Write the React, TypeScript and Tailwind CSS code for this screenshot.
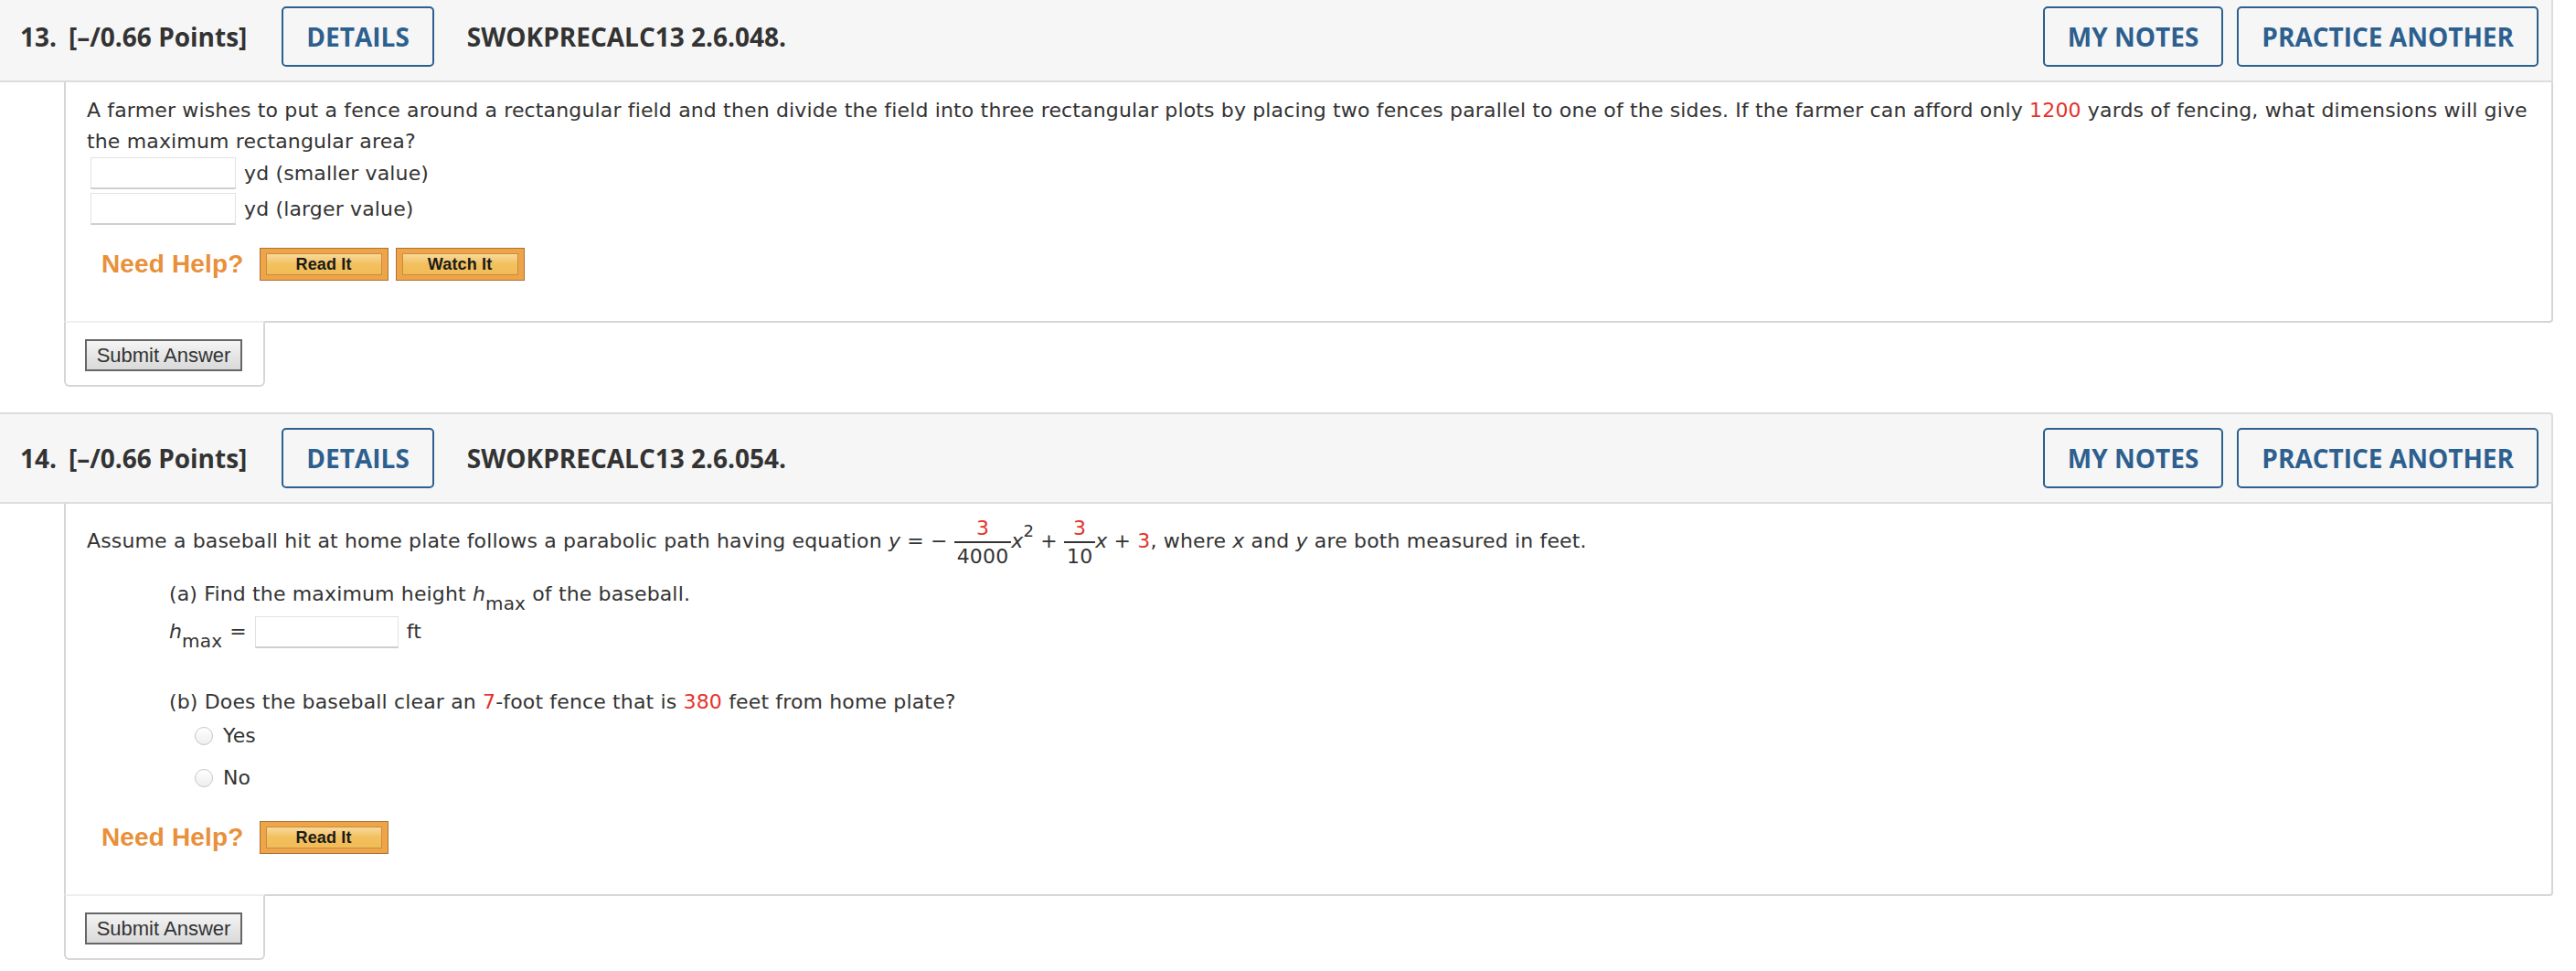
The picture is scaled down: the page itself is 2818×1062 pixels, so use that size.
import React from 'react'

const Red = ({ children }: { children: React.ReactNode }) => (
  <span className="text-[#e5322b]">{children}</span>
)

const HeaderBtn = ({ label }: { label: string }) => (
  <span className="flex h-[66px] items-center rounded-[5px] border-2 border-[#2d5f8f] px-[25px] text-[#2d5f8f]">
    {label}
  </span>
)

const QuestionHeader = ({ num, code }: { num: string; code: string }) => {
  return (
    <div className="flex h-[100px] w-[2793px] items-center rounded-tr-[4px] border-2 border-l-0 border-[#dddddd] bg-[#f6f6f6] pl-[22px] pr-[14px] font-['Open_Sans',sans-serif] text-[28px] font-bold text-[#333]">
      <span className="flex gap-[13px]">
        <span>{num}.</span>
        <span>[–/0.66 Points]</span>
      </span>
      <span className="ml-[38px]">
        <HeaderBtn label="DETAILS" />
      </span>
      <span className="ml-[36px]">{code}</span>
      <div className="ml-auto flex gap-[15px]">
        <HeaderBtn label="MY NOTES" />
        <HeaderBtn label="PRACTICE ANOTHER" />
      </div>
    </div>
  )
}

const HelpBtn = ({ label }: { label: string }) => (
  <span className="flex h-[36px] w-[141px] border border-[#a8733a] bg-[#eea447] px-[6px] py-[5px]">
    <span className="flex h-full w-full items-center justify-center border border-[#c98d42] bg-linear-to-b from-[#f8d999] via-[#f2c05d] to-[#f1bc56] font-['Liberation_Sans',sans-serif] text-[18px] font-bold leading-none text-[#1a1a1a]">
      {label}
    </span>
  </span>
)

const NeedHelp = ({ watch }: { watch?: boolean }) => (
  <div className="ml-[16px] flex h-[36px] items-center">
    <span className="font-['Liberation_Sans',sans-serif] text-[28px] font-bold text-[#e8903a]">
      Need Help?
    </span>
    <span className="ml-[17px] flex gap-[8px]">
      <HelpBtn label="Read It" />
      {watch && <HelpBtn label="Watch It" />}
    </span>
  </div>
)

const SubmitTab = () => (
  <div className="relative -mt-[2px] ml-[70px] h-[72px] w-[220px] rounded-b-[6px] border-2 border-[#d6d6d6] border-t-[#efefef] bg-white pl-[21px] pt-[18px]">
    <span className="flex h-[35px] w-[172px] items-center justify-center border-2 border-[#666] bg-linear-to-b from-[#f4f4f4] to-[#d9d9d9] font-['Liberation_Sans',sans-serif] text-[22px] text-[#333]">
      Submit Answer
    </span>
  </div>
)

const Blank = ({ w }: { w: string }) => (
  <span className={`inline-block h-[35px] ${w} border border-[#e2e2e2] border-b-2 border-b-[#cfcfcf] bg-white align-middle`} />
)

const Radio = ({ label }: { label: string }) => (
  <div className="ml-[118px] flex h-[32px] items-center">
    <span className="h-[20px] w-[20px] rounded-full border border-[#c6c6c6] bg-linear-to-b from-white to-[#eeeeee]" />
    <span className="ml-[11px]">{label}</span>
  </div>
)

const Frac = ({ num, den }: { num: string; den: string }) => (
  <span className="inline-flex flex-col items-center align-middle leading-[29px]">
    <span className="text-[#e5322b]">{num}</span>
    <span className="h-[2px] w-full bg-[#333]" />
    <span className="px-[3px]">{den}</span>
  </span>
)

const bodyCls =
  "ml-[70px] w-[2723px] rounded-br-[4px] border-2 border-t-0 border-[#d6d6d6] bg-white pl-[23px] pr-[20px] font-['DejaVu_Sans',sans-serif] text-[22px] leading-[34px] tracking-[0.15px] text-[#333]"

const App = () => {
  return (
    <div className="h-[1062px] w-[2818px] overflow-hidden bg-white">
      <div className="-mt-[10px]">
        <QuestionHeader num="13" code="SWOKPRECALC13 2.6.048." />
        <div className={`${bodyCls} pb-[44px] pt-[14px]`}>
          <p>
            A farmer wishes to put a fence around a rectangular field and then divide the field into
            three rectangular plots by placing two fences parallel to one of the sides. If the farmer
            can afford only <Red>1200</Red> yards of fencing, what dimensions will give the maximum
            rectangular area?
          </p>
          <div className="ml-[4px] flex h-[35px] items-center">
            <Blank w="w-[159px]" />
            <span className="ml-[9px]">yd (smaller value)</span>
          </div>
          <div className="ml-[4px] mt-[4px] flex h-[35px] items-center">
            <Blank w="w-[159px]" />
            <span className="ml-[9px]">yd (larger value)</span>
          </div>
          <div className="mt-[25px]">
            <NeedHelp watch />
          </div>
        </div>
        <SubmitTab />

        <div className="mt-[28px]">
          <QuestionHeader num="14" code="SWOKPRECALC13 2.6.054." />
        </div>
        <div className={`${bodyCls} pb-[44px] pt-[12px]`}>
          <p>
            Assume a baseball hit at home plate follows a parabolic path having equation <i>y</i> = −{' '}
            <Frac num="3" den="4000" />
            <i>x</i>
            <span className="align-[12px] text-[18px] leading-none">2</span> +{' '}
            <Frac num="3" den="10" />
            <i>x</i> + <Red>3</Red>, where <i>x</i> and <i>y</i> are both measured in feet.
          </p>
          <p className="ml-[90px] mt-[10px]">
            (a) Find the maximum height <i>h</i>
            <span className="relative top-[10px] text-[20px]">max</span> of the baseball.
          </p>
          <div className="ml-[90px] mt-[7px] flex h-[34px] items-center">
            <i>h</i>
            <span className="relative top-[10px] text-[20px]">max</span>
            <span className="ml-[8px]">=</span>
            <span className="ml-[9px]">
              <Blank w="w-[157px]" />
            </span>
            <span className="ml-[9px]">ft</span>
          </div>
          <p className="ml-[90px] mt-[43px]">
            (b) Does the baseball clear an <Red>7</Red>-foot fence that is <Red>380</Red> feet from home
            plate?
          </p>
          <div className="mt-[4px]">
            <Radio label="Yes" />
          </div>
          <div className="mt-[14px]">
            <Radio label="No" />
          </div>
          <div className="mt-[31px]">
            <NeedHelp />
          </div>
        </div>
        <SubmitTab />
      </div>
    </div>
  )
}

export default App
